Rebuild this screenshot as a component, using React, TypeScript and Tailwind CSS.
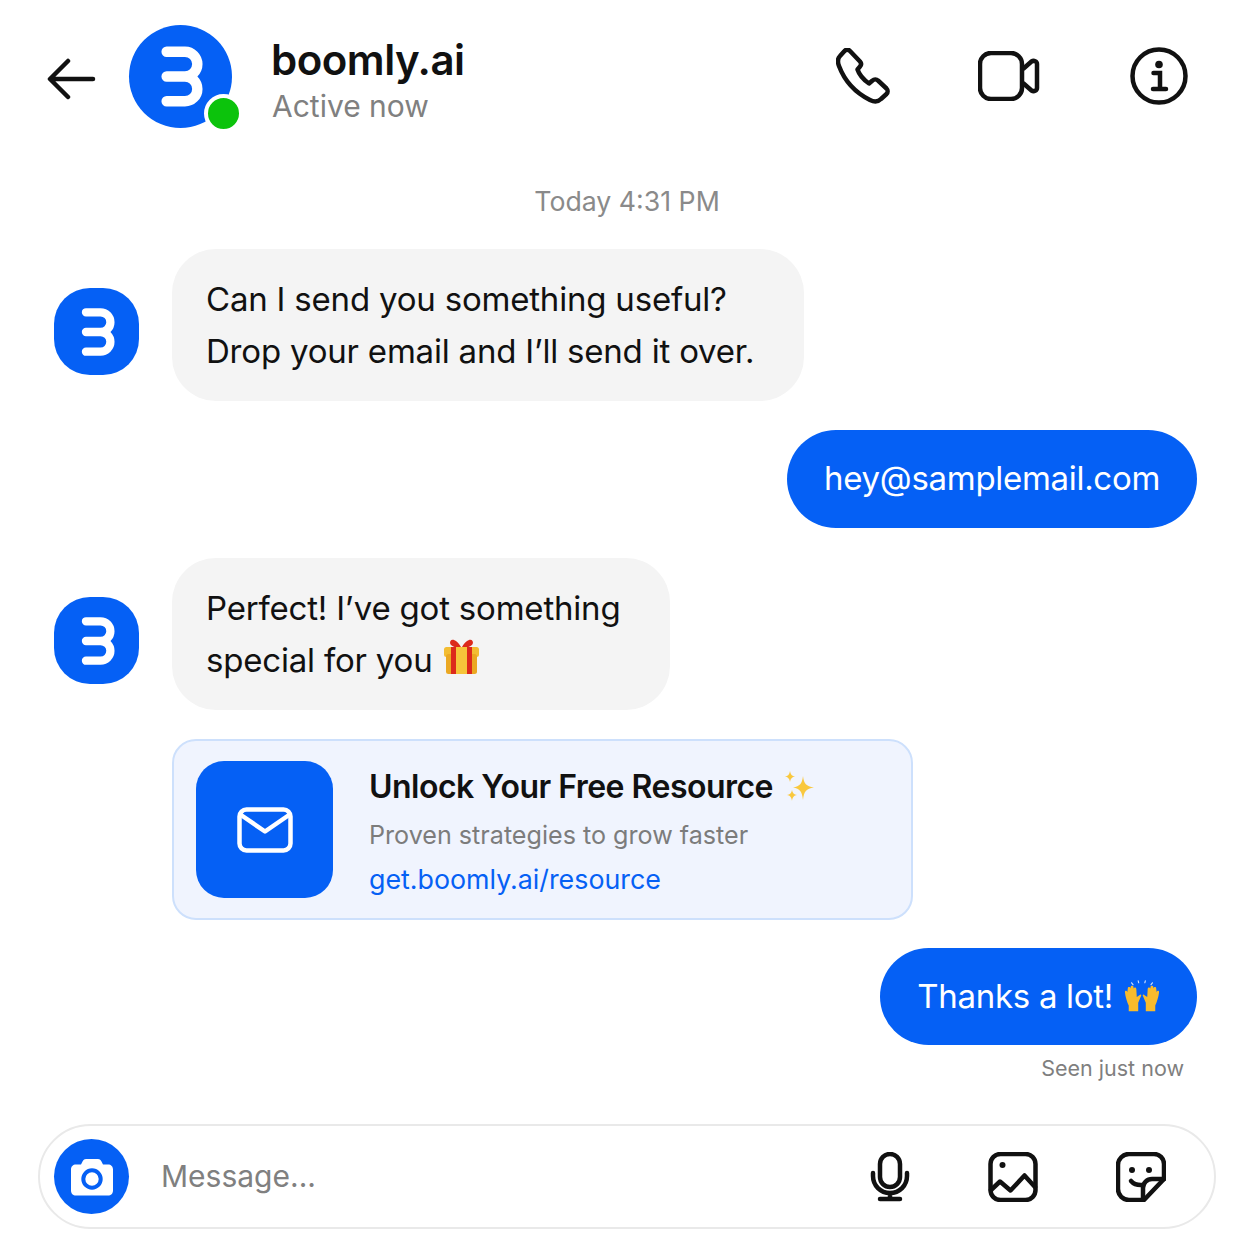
import React from 'react';

const BoomlyMark = ({ size }: { size: number }) => (
  <svg width={size} height={size} viewBox="0 0 104 104" fill="none" stroke="#fff" strokeWidth="10.5" strokeLinecap="round">
    <path d="M38 27H56.5a12.5 12.5 0 0 1 0 25H38M56.5 52a12.5 12.5 0 0 1 0 25H38" />
  </svg>
);

const BotAvatar = () => (
  <div className="w-[85px] h-[87px] mt-[13px] shrink-0 rounded-[36px] bg-[#0560f5] flex items-center justify-center">
    <BoomlyMark size={82} />
  </div>
);

const BackIcon = () => (
  <svg width="50" height="46" viewBox="0 0 50 46" fill="none" stroke="#111" strokeWidth="4.5" strokeLinecap="round" strokeLinejoin="round">
    <path d="M46 23H4M21 5 3 23l18 18" />
  </svg>
);

const PhoneIcon = () => (
  <svg width="54" height="56" viewBox="0 0 54 56" fill="none" stroke="#111" strokeWidth="4.5" strokeLinejoin="round">
    <path d="M8.5 3C10 1.2 12.5 1.2 14 3L24 13.5C25.3 15 25.3 17 24 18.5L21.5 21.5C23 26 28 32 33 35.5L36.5 32.5C38 31 40.5 31 42 32.5L50.5 40.5C52 42 52 44.5 50.5 46L45 51C42 54 38 54 34 52C20 45 9 34 3 18C1.5 14 2 10 4 8Z" />
  </svg>
);

const VideoIcon = () => (
  <svg width="62" height="50" viewBox="0 0 62 50" fill="none" stroke="#111" strokeWidth="4.5" strokeLinejoin="round">
    <rect x="2" y="2" width="42" height="46" rx="11" />
    <path d="M45 18L53.5 10.5C56 9 59 10.5 59 13V37C59 39.5 56 41 53.5 39.5L45 32" />
  </svg>
);

const InfoIcon = () => (
  <svg width="58" height="58" viewBox="0 0 58 58" fill="none" stroke="#111" strokeWidth="4.5">
    <circle cx="29" cy="29" r="26.5" />
    <circle cx="29" cy="17.5" r="3.8" fill="#111" stroke="none" />
    <path d="M23.5 26H30V42M23 42H36" strokeLinecap="round" />
  </svg>
);

const MicIcon = () => (
  <svg width="40" height="50" viewBox="0 0 40 50" fill="none" stroke="#111" strokeWidth="4.5" strokeLinecap="round">
    <rect x="10" y="2" width="20" height="33" rx="10" />
    <path d="M3 21V24C3 33.5 10.5 41 20 41S37 33.5 37 24V21M20 41V47M10 47H30" />
  </svg>
);

const ImageIcon = () => (
  <svg width="50" height="50" viewBox="0 0 50 50" fill="none" stroke="#111" strokeWidth="4.5" strokeLinejoin="round" strokeLinecap="round">
    <rect x="2.5" y="2" width="45" height="46" rx="10" />
    <circle cx="14.5" cy="13" r="3" fill="#111" stroke="none" />
    <path d="M3 38L12 29.5L22.5 38.5L36.5 23.5L47 35" />
  </svg>
);

const StickerIcon = () => (
  <svg width="50" height="50" viewBox="0 0 50 50" fill="none" stroke="#111" strokeWidth="4.5" strokeLinejoin="round" strokeLinecap="round">
    <path d="M13 2H38C43.5 2 48 6.5 48 12V27L28 48H13C7 48 2 43.5 2 37V13C2 7 7 2 13 2Z" />
    <path d="M48 27H36C31 27 27 31 27 36V48" />
    <path d="M15 29C18 32.5 22 33.5 27 33" />
    <circle cx="16" cy="18" r="3" fill="#111" stroke="none" />
    <circle cx="33" cy="18" r="3" fill="#111" stroke="none" />
  </svg>
);

const CameraIcon = () => (
  <svg width="44" height="38" viewBox="0 0 44 38">
    <path
      fill="#fff"
      d="M16 1H28C29.5 1 30.5 1.8 31.2 3L33 6.5H38C41 6.5 43 8.5 43 11.5V32.5C43 35.5 41 37.5 38 37.5H6C3 37.5 1 35.5 1 32.5V11.5C1 8.5 3 6.5 6 6.5H11L12.8 3C13.5 1.8 14.5 1 16 1Z"
    />
    <circle cx="22" cy="21" r="8.7" fill="none" stroke="#0560f5" strokeWidth="4" />
  </svg>
);

const MailIcon = () => (
  <svg width="56" height="46" viewBox="0 0 56 46" fill="none" stroke="#fff" strokeWidth="4.5" strokeLinecap="round" strokeLinejoin="round">
    <rect x="2.5" y="2.5" width="51" height="41" rx="7" />
    <path d="M4 8L28 24.5L52 8" />
  </svg>
);

const GiftEmoji = () => (
  <svg width="37" height="36" viewBox="0 0 37 36" className="-mt-[6px]">
    <path d="M18 8C14 1 9 -0.5 7.5 2C6 4.5 8 9 18 9ZM19 8C23 1 28 -0.5 29.5 2C31 4.5 29 9 19 9Z" fill="#dc2a1c" />
    <rect x="1" y="8" width="35" height="10" rx="2.5" fill="#f3bd32" />
    <rect x="3" y="15" width="31" height="20" rx="2.5" fill="#eba822" />
    <rect x="13" y="8" width="11" height="27" fill="#f6c53a" />
    <rect x="8" y="8" width="5" height="27" fill="#dc2a1c" />
    <rect x="24" y="8" width="5" height="27" fill="#dc2a1c" />
  </svg>
);

const SparklesEmoji = () => (
  <svg width="32" height="32" viewBox="0 0 32 32" fill="#f9c83e">
    <path d="M20 5C21 13 23 15 31 16.5C23 18 21 20 20 29C19 20 17 18 10 16.5C17 15 19 13 20 5Z" />
    <path d="M7 0C7.5 3.5 9 5 12 5.5C9 6 7.5 7.5 7 11C6.5 7.5 5 6 2 5.5C5 5 6.5 3.5 7 0Z" />
    <path d="M9 19C9.5 22 11 23.5 14 24C11 24.5 9.5 26 9 30C8.5 26 7 24.5 4 24C7 23.5 8.500 22 9 19Z" />
  </svg>
);

const HandsEmoji = () => (
  <svg width="36" height="36" viewBox="0 0 38 36">
    <g fill="#f8bb2d">
      <path d="M5 33V27C3.5 24 1.5 18 1 13C0.8 11 3 11 3.5 13L4 9C4 7 6.5 7 6.8 9L7 7.5C7.2 5.5 10 5.5 10 7.5L10.2 9C10.5 7.5 12.8 7.5 13 9.5L13.5 18L17 15.5C18 15 18.5 16 18 17L15 24V33Z" />
      <path d="M33 33V27C34.5 24 36.5 18 37 13C37.2 11 35 11 34.5 13L34 9C34 7 31.5 7 31.2 9L31 7.5C30.8 5.5 28 5.5 28 7.5L27.8 9C27.5 7.5 25.2 7.5 25 9.5L24.5 18L21 15.5C20 15 19.5 16 20 17L23 24V33Z" />
    </g>
    <path d="M8 3L9.5 5M15 1L15.5 3M22.5 1L22 3M30 3L28.5 5" stroke="#cfe0ff" strokeWidth="1.2" strokeLinecap="round" />
  </svg>
);

const BotBubble = ({ children }: { children: React.ReactNode }) => (
  <div className="bg-[#f4f4f4] rounded-[44px] pl-[34px] pr-[50px] py-[24px] text-[33px] leading-[52px] text-[#111] tracking-[-0.2px]">
    {children}
  </div>
);

const UserBubble = ({ children, className }: { children: React.ReactNode; className: string }) => (
  <div className={`self-end bg-[#0560f5] rounded-full pl-[37px] pr-[37px] flex items-center gap-[11px] text-[33px] text-white tracking-[-0.3px] ${className}`}>
    {children}
  </div>
);

export default function App() {
  return (
    <div className="w-[1254px] h-[1254px] bg-white overflow-hidden flex flex-col font-['Inter',sans-serif]">
      {/* Header */}
      <header className="h-[154px] pl-[47px] pr-[66px] pt-[25px] flex items-start">
        <div className="mt-[31px] mr-[32px]">
          <BackIcon />
        </div>
        <div className="relative w-[103px] h-[103px] rounded-full bg-[#0560f5] flex items-center justify-center">
          <BoomlyMark size={103} />
          <span className="absolute left-[75px] top-[69px] w-[39px] h-[39px] rounded-full bg-[#0cc30c] border-4 border-white" />
        </div>
        <div className="ml-[39px] flex flex-col">
          <span className="text-[42px] leading-[50px] mt-[10px] font-semibold text-[#111] tracking-[-0.5px]">boomly.ai</span>
          <span className="text-[30px] leading-[40px] mt-[1px] ml-[1px] text-[#808080]">Active now</span>
        </div>
        <div className="ml-auto flex items-center mt-[22px]">
          <PhoneIcon />
          <div className="ml-[88px]">
            <VideoIcon />
          </div>
          <div className="ml-[90px]">
            <InfoIcon />
          </div>
        </div>
      </header>

      <div className="text-center text-[26.7px] leading-[34px] mt-[30px] text-[#8a8a8a]">Today 4:31 PM</div>

      {/* Messages */}
      <main className="mt-[31px] pl-[54px] pr-[57px] flex flex-col gap-[29px]">
        <div className="flex items-center gap-[33px]">
          <BotAvatar />
          <BotBubble>
            Can I send you something useful?
            <br />
            Drop your email and I’ll send it over.
          </BotBubble>
        </div>

        <UserBubble className="h-[98px]">hey@samplemail.com</UserBubble>

        <div className="mt-px flex items-center gap-[33px]">
          <BotAvatar />
          <BotBubble>
            Perfect! I’ve got something
            <br />
            <span className="inline-flex items-center gap-[11px]">
              special for you <GiftEmoji />
            </span>
          </BotBubble>
        </div>

        <div className="ml-[118px] w-[741px] h-[181px] bg-[#f0f4fe] border-2 border-[#cde0fc] rounded-[24px] pl-[22px] flex items-center gap-[36px]">
          <div className="w-[137px] h-[137px] rounded-[28px] bg-[#0560f5] flex items-center justify-center">
            <MailIcon />
          </div>
          <div className="pt-[5px] flex flex-col">
            <div className="flex items-center gap-[10px] text-[32px] leading-[44px] font-semibold text-[#111] tracking-[-0.52px]">
              Unlock Your Free Resource <SparklesEmoji />
            </div>
            <div className="text-[25.13px] leading-[40px] mt-[6px] text-[#7c7c7c]">Proven strategies to grow faster</div>
            <div className="text-[26.8px] leading-[40px] mt-[4px] text-[#0560f5]">get.boomly.ai/resource</div>
          </div>
        </div>

        <UserBubble className="h-[97px] -mt-px">
          Thanks a lot! <HandsEmoji />
        </UserBubble>
      </main>

      <div className="mt-[7px] pr-[70px] text-right text-[21.5px] leading-[32px] text-[#7f7f7f]">Seen just now</div>

      {/* Composer */}
      <div className="mt-[40px] mx-[38px] h-[105px] border-2 border-[#e9e9e9] rounded-full pl-[14px] pr-[48px] flex items-center">
        <div className="w-[75px] h-[75px] rounded-full bg-[#0560f5] flex items-center justify-center">
          <CameraIcon />
        </div>
        <span className="ml-[32px] text-[30px] text-[#808080]">Message...</span>
        <div className="ml-auto flex items-center gap-[78px]">
          <MicIcon />
          <ImageIcon />
          <StickerIcon />
        </div>
      </div>
    </div>
  );
}
